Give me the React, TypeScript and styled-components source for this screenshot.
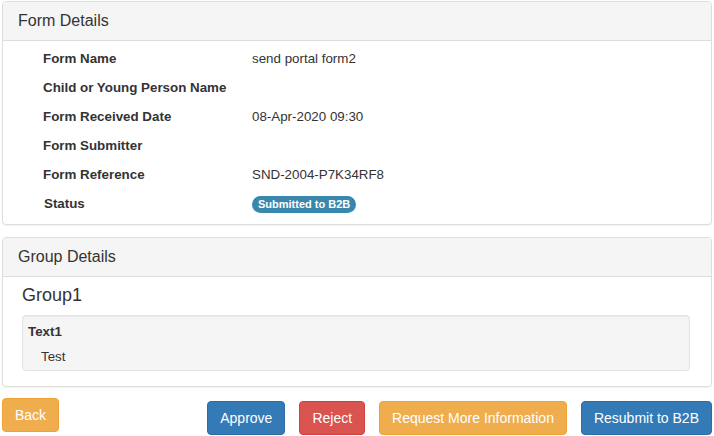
import styled, { createGlobalStyle } from 'styled-components'

const GlobalStyle = createGlobalStyle`
  html, body {
    margin: 0;
    padding: 0;
    background: #fff;
  }
  body {
    font-family: "Liberation Sans", Arial, sans-serif;
    font-size: 14px;
    color: #333;
  }
  * {
    box-sizing: border-box;
  }
`

const Page = styled('div')`
  padding: 1px 2px 0 2px;
  width: 714px;
`

const Panel = styled('section')<{ $gap?: number }>`
  border: 1px solid #ddd;
  border-radius: 4px;
  background: #fff;
  margin-bottom: ${({ $gap }) => $gap ?? 0}px;
  box-shadow: 0 1px 1px rgba(0, 0, 0, 0.05);
`

const PanelHeading = styled('div')`
  background: #f5f5f5;
  border-bottom: 1px solid #ddd;
  border-radius: 3px 3px 0 0;
  padding: 10px 15px;
  font-size: 16px;
  line-height: 18px;
  color: #333;
`

const DetailList = styled('div')`
  padding: 3px 0 6px 40px;
  font-size: 13.35px;
`

const DetailRow = styled('div')`
  display: grid;
  grid-template-columns: 209px 1fr;
  height: 29px;
  align-items: center;
`

const Label = styled('div')<{ $nudge?: number }>`
  font-weight: bold;
  padding-left: ${({ $nudge }) => $nudge ?? 0}px;
`

const Value = styled('div')``

const Badge = styled('span')`
  display: inline-block;
  background: #3a87ad;
  color: #fff;
  font-size: 11px;
  font-weight: bold;
  line-height: 17px;
  height: 17px;
  padding: 0 6px;
  border-radius: 9px;
  margin-top: 1px;
`

const GroupBody = styled('div')`
  padding: 0 21px 15px 19px;
`

const GroupTitle = styled('h4')`
  margin: 8px 0 10px 0;
  font-size: 18px;
  font-weight: normal;
  line-height: 20px;
`

const Well = styled('div')`
  background: #f5f5f5;
  border: 1px solid #e3e3e3;
  border-radius: 4px;
  padding: 6px 5px 3px 5px;
  font-size: 13.35px;
  box-shadow: inset 0 1px 1px rgba(0, 0, 0, 0.05);
`

const FieldName = styled('div')`
  font-weight: bold;
  line-height: 20px;
`

const FieldValue = styled('div')`
  padding-left: 13px;
  margin-top: 5px;
  line-height: 20px;
`

const Actions = styled('div')`
  display: flex;
  align-items: flex-start;
  margin-top: 11px;
`

const ActionGroup = styled('div')`
  display: flex;
  gap: 14px;
  margin-left: auto;
  margin-top: 3px;
`

const variants = {
  warning: { bg: '#f0ad4e', border: '#eea236' },
  primary: { bg: '#337ab7', border: '#2e6da4' },
  danger: { bg: '#d9534f', border: '#d43f3a' },
}

const Button = styled('button')<{ $variant: keyof typeof variants }>`
  font-family: inherit;
  font-size: 14px;
  line-height: 20px;
  padding: 6px 12px;
  height: 34px;
  color: #fff;
  border-radius: 4px;
  cursor: pointer;
  background: ${({ $variant }) => variants[$variant].bg};
  border: 1px solid ${({ $variant }) => variants[$variant].border};
`

const details = [
  { label: 'Form Name', value: 'send portal form2' },
  { label: 'Child or Young Person Name', value: '' },
  { label: 'Form Received Date', value: '08-Apr-2020 09:30' },
  { label: 'Form Submitter', value: '' },
  { label: 'Form Reference', value: 'SND-2004-P7K34RF8' },
]

export default function App() {
  return (
    <>
      <GlobalStyle />
      <Page>
        <Panel $gap={12}>
          <PanelHeading>Form Details</PanelHeading>
          <DetailList>
            {details.map((d) => (
              <DetailRow key={d.label}>
                <Label>{d.label}</Label>
                <Value>{d.value}</Value>
              </DetailRow>
            ))}
            <DetailRow>
              <Label $nudge={1}>Status</Label>
              <Value>
                <Badge>Submitted to B2B</Badge>
              </Value>
            </DetailRow>
          </DetailList>
        </Panel>

        <Panel>
          <PanelHeading>Group Details</PanelHeading>
          <GroupBody>
            <GroupTitle>Group1</GroupTitle>
            <Well>
              <FieldName>Text1</FieldName>
              <FieldValue>Test</FieldValue>
            </Well>
          </GroupBody>
        </Panel>

        <Actions>
          <Button $variant="warning">Back</Button>
          <ActionGroup>
            <Button $variant="primary">Approve</Button>
            <Button $variant="danger">Reject</Button>
            <Button $variant="warning">Request More Information</Button>
            <Button $variant="primary">Resubmit to B2B</Button>
          </ActionGroup>
        </Actions>
      </Page>
    </>
  )
}
